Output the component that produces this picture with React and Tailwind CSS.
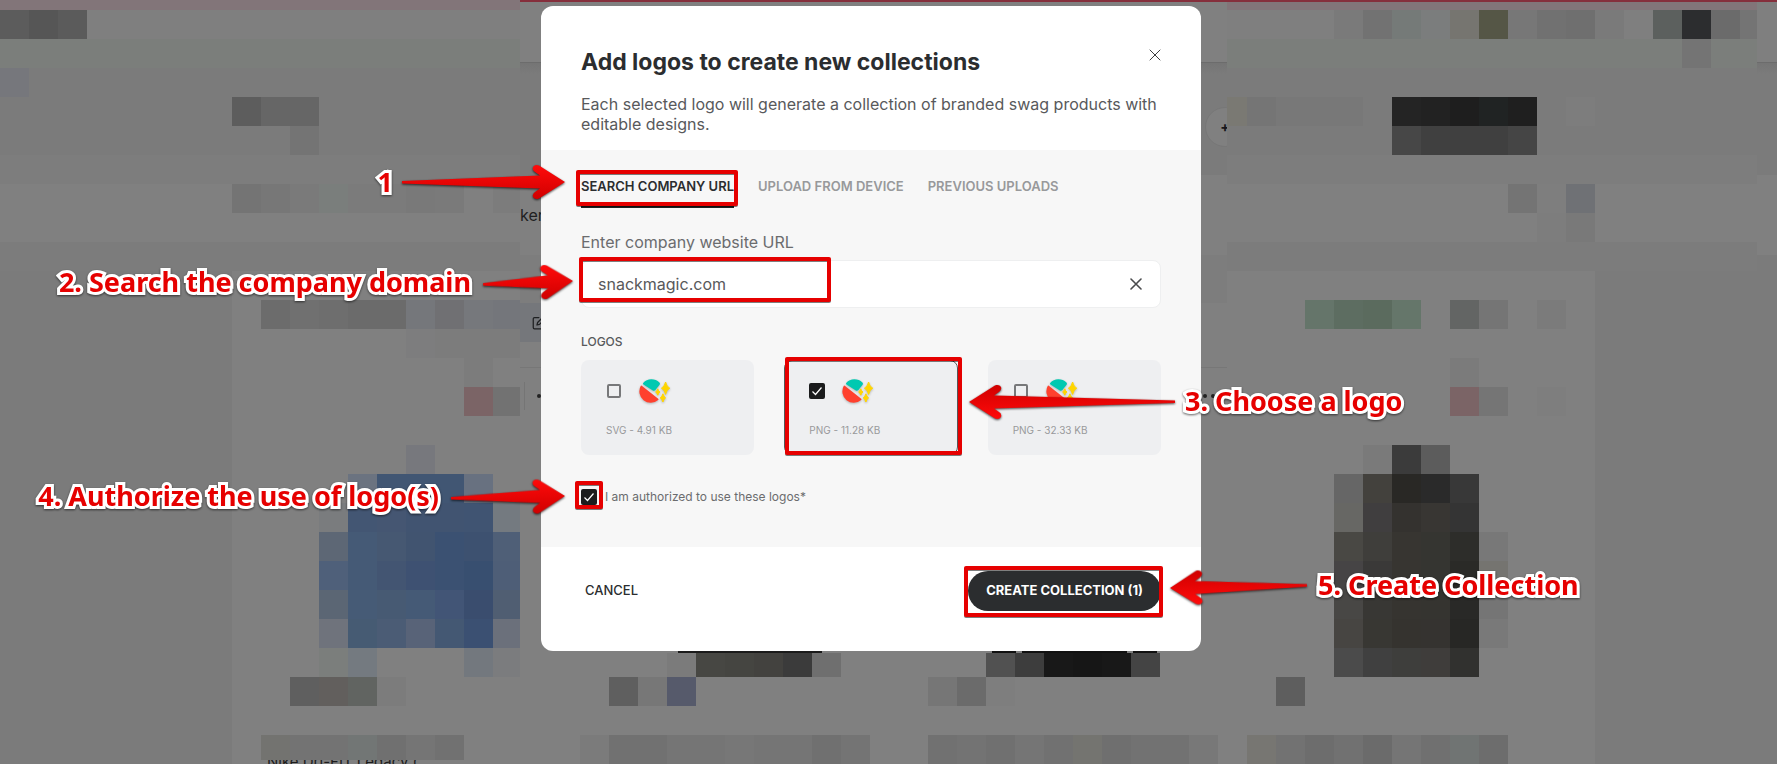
import { useState } from "react";
import { FiEdit } from "react-icons/fi";
import { clsx } from "clsx";

// Pixelated areas: [row, first column, colors of the following cells]
const LEFT_CELLS = [
  [0, 0, "#5c5c5c #565656 #5b5b5b"],
  [2, 0, "#76777c"],
  [3, 8, "#5d5d5d #666666 #666666"],
  [4, 10, "#747474"],
  [6, 8, "#747474 #777777 #7a7a7a #7a7e7c #7b7b7b #7b7b7b #797979 #7a7a7a #808080 #7c7c7c"],
  [10, 9, "#6c6c6c #707070 #6e6e6e #6b6b6b #6b6b6b #75777b #707073 #76787c #74767b"],
  [11, 14, "#7d7d7e #7c7c7c #7c7c7c #7c7c7c"],
  [12, 16, "#7c7c7c"],
  [13, 16, "#7b6466 #727272"],
  [15, 14, "#77787d"],
  [16, 12, "#6b7380 #415673 #415673 #415673 #687180"],
  [17, 11, "#7a7c7e #435673 #455672 #415471 #415471 #405472 #747a80"],
  [18, 11, "#5d6775 #455a76 #465872 #415470 #3b5172 #3d5170 #4f5f77"],
  [19, 11, "#4f607a #455a76 #435572 #3e5172 #3b5172 #384f70 #4e5e77"],
  [20, 11, "#5b6674 #465b76 #475a73 #455a76 #425576 #3a4d6e #505e72"],
  [21, 11, "#6f737c #465b73 #4b5c75 #586378 #445873 #3b5072 #6b707b"],
  [22, 11, "#7b7e7c #747a80 #808080 #808080 #808080 #73787e #7b7c7e"],
  [23, 10, "#5f5f5f #625f5d #616461 #7c7c7c"],
  [25, 9, "#737370 #737373 #737373 #727675 #707070 #757575 #717171"],
];

const RIGHT_CELLS = [
  [0, 4, "#7a7a7a #727272 #757a78 #7b7d7d #767570 #555646 #777777 #717171 #6f6f6f #7a7a7a #7f7f7f #5c605e #2c2d2f #6b6b6b #747474"],
  [1, 16, "#747474"],
  [3, 0, "#7a7973 #757575 #787878 #787878 #787878 #7b7b7b #242424 #222222 #1e1e1e #202323 #1f1f1f #7b7b7b #7d7d7d"],
  [4, 6, "#474747 #404040 #404040 #404040 #454545"],
  [6, 10, "#747474 #7e7e7e #6f7175"],
  [7, 11, "#7d7d7d #797979"],
  [10, 3, "#65756a #5d6d61 #5b6b5e #65766a #808080 #636564 #757575 #808080 #7b7b7b"],
  [12, 8, "#7b7b7b"],
  [13, 8, "#7b6466 #757575 #808080 #7e7e7e"],
  [15, 5, "#7a7a7a #3b3b3b #5c5c5c"],
  [16, 4, "#666666 #43413d #292825 #2a2a2a #383838"],
  [17, 4, "#676764 #403e3f #34322f #383633 #343434"],
  [18, 4, "#494844 #3f3e3b #373531 #353531 #2d2d2a #787878"],
  [19, 4, "#464445 #3a3938 #373531 #353531 #2a2a27 #757470"],
  [20, 4, "#484745 #383734 #363430 #353430 #292927 #757575"],
  [21, 4, "#474542 #383733 #35332f #353330 #272725 #797979"],
  [22, 4, "#4b4b4b #404040 #3e3e3c #3f3d3b #31312f"],
  [23, 2, "#5e5e5e"],
  [25, 1, "#777672 #727272 #6d6d6d #717171 #6b6b6b #757575 #707070 #707473 #6d6d6d"],
];

const CENTER_CELLS = [
  [0, 5, "#7b7b7b #474743 #454541 #43423f #3b3b3b #6f6f6f"],
  [0, 16, "#515151 #3d3d3d #181818 #161616 #181818 #444444"],
  [1, 3, "#5f5f5f #777777 #565a6b"],
  [1, 14, "#767676 #6b6b6b #7e7e7e"],
  [3, 2, "#7b7b7b #717171 #717171 #757575 #757575 #777777 #757575 #757575 #707070 #747474"],
  [3, 14, "#717171 #737373 #707070 #757575 #717171 #747470 #6f6f6f #727272 #727272 #787878"],
];

const LOGOS = [
  { id: "svg", label: "SVG - 4.91 KB" },
  { id: "png-small", label: "PNG - 11.28 KB" },
  { id: "png-large", label: "PNG - 32.33 KB" },
];

const TABS = ["Search company URL", "Upload from device", "Previous uploads"];

// rowStart and colStart are the grid lines of row 0 and column 0
function Cells({ data, rowStart = 2, colStart = 1 }) {
  return data.flatMap(([row, col, colors]) =>
    colors.split(" ").map((color, i) => (
      <div
        key={`${row}-${col + i}`}
        style={{
          gridRow: row + rowStart,
          gridColumn: col + i + colStart,
          backgroundColor: color,
        }}
      />
    ))
  );
}

function Bands() {
  return (
    <>
      <div className="col-span-full row-start-1 bg-[#827579]" />
      <div className="col-span-full row-start-2 bg-[#7f7f7f]" />
      <div className="col-span-full row-start-3 bg-[#7b7e7b]" />
      <div className="col-span-full row-start-4 row-end-7 bg-[#7b7b7b]" />
      <div className="col-span-full row-start-7 bg-[#7d7d7d]" />
      <div className="col-span-full row-start-8 row-end-10 bg-[#808080]" />
      <div className="col-span-full row-start-10 bg-[#7c7c7c]" />
    </>
  );
}

function Backdrop() {
  return (
    <div className="absolute inset-0 flex overflow-hidden bg-[#808080]" aria-hidden="true">
      {/* Left column */}
      <div className="grid w-[520px] shrink-0 grid-cols-[repeat(18,29px)] grid-rows-[10px_repeat(25,29px)_25px_4px] overflow-hidden">
        <Bands />
        <div className="col-start-1 col-end-9 row-start-11 row-end-29 bg-[#7b7b7b]" />
        <Cells data={LEFT_CELLS} />
        <div className="col-start-10 col-end-19 row-start-28 flex h-1 items-center overflow-hidden pl-1.5 font-['Inter'] text-[15px] whitespace-nowrap text-[#1c1c1c]">
          Nike Dri-FIT Legacy (
        </div>
      </div>

      {/* Middle column, mostly covered by the dialog */}
      <div className="flex min-w-0 flex-1 flex-col overflow-hidden">
        <div className="h-0.5 bg-[#852f3c]" />
        <div className="h-15 bg-[#808080]" />
        <div className="flex h-[113px] justify-end border-t border-[#6c6c6c] bg-linear-to-b from-[#757575] to-[#7b7b7b] to-10% pt-11">
          <div className="-mr-4.5 flex size-10 items-center justify-center rounded-full border border-[#777777] bg-[#808080] text-sm font-bold text-[#16161c]">
            +
          </div>
        </div>
        <div className="flex h-20 items-center bg-[#808080] font-['Inter'] text-base text-[#1f2022]">
          kers
        </div>
        <div className="h-12 bg-[#7d7d7d]" />
        <div className="flex h-[39px]">
          <div className="flex w-20 items-center bg-[#75777b] pl-3 text-[#1f2022]">
            <FiEdit size={15} />
          </div>
        </div>
        <div className="h-[26px] border-b border-[#777777]" />
        <div className="flex h-14 items-center justify-between pr-3 pl-1">
          <div className="flex items-center border-l border-[#757575] py-3 pl-3">
            <span className="size-1 rounded-full bg-[#222222]" />
          </div>
          <div className="flex gap-1">
            <span className="size-1 rounded-full bg-[#222222]" />
            <span className="size-1 rounded-full bg-[#222222]" />
          </div>
        </div>
        <div className="flex-1" />
        <div className="flex h-1 pl-[158px]">
          <div className="w-36 bg-[#1b1b1b]" />
          <div className="ml-[170px] w-6 bg-[#111111]" />
          <div className="ml-1.5 w-[105px] bg-[#111111]" />
          <div className="ml-1.5 w-6 bg-[#111111]" />
        </div>
        <div className="grid grid-cols-[2px_repeat(24,29px)] grid-rows-[24px_repeat(3,29px)]">
          <Cells data={CENTER_CELLS} rowStart={1} colStart={2} />
        </div>
      </div>

      {/* Right column */}
      <div className="grid w-[530px] shrink-0 grid-cols-[20px_repeat(18,29px)] grid-rows-[8px_repeat(26,29px)] overflow-hidden border-t-2 border-[#852f3c]">
        <Bands />
        <div className="col-start-14 col-end-20 row-start-11 row-end-28 bg-[#7b7b7b]" />
        <Cells data={RIGHT_CELLS} />
      </div>

      {/* Page gutter */}
      <div className="flex w-5 shrink-0 flex-col">
        <div className="h-0.5 bg-[#852f3c]" />
        <div className="h-15 bg-[#7f7f7f]" />
        <div className="h-[113px] border-t border-[#6c6c6c] bg-linear-to-b from-[#757575] to-[#7b7b7b] to-10%" />
        <div className="h-20 bg-[#808080]" />
        <div className="flex-1 bg-[#7b7b7b]" />
      </div>
    </div>
  );
}

function BrandLogo() {
  return (
    <svg viewBox="0 0 33 26" className="h-[26px] w-[33px] drop-shadow-[0_1px_1px_rgba(0,0,0,0.25)]" aria-hidden="true">
      <path d="M4.2 5A11.2 11.2 0 0 1 20.4 4.6Q21.4 5.6 20.6 6.8L16.4 12Q15.2 13.4 13.8 12.4L4.8 6.8Q3.6 6 4.2 5Z" fill="#00c9b1" />
      <path d="M1.8 7.8Q2.2 7.4 2.8 7.8L19.2 20.8Q19.8 21.4 19.2 22A11.4 11.4 0 0 1 1.8 7.8Z" fill="#ff402e" />
      <path d="M26.6 4Q27.6 8.8 30.8 10.2Q27.6 11.6 26.6 16.4Q25.6 11.6 22.4 10.2Q25.6 8.8 26.6 4Z" fill="#ffd500" stroke="#ffd500" />
      <path d="M18.8 10.8Q19.4 13.2 21 14Q19.4 14.8 18.8 17.2Q18.2 14.8 16.6 14Q18.2 13.2 18.8 10.8Z" fill="#ffd500" stroke="#ffd500" />
      <path d="M23.9 15.8Q24.7 18.8 26.6 19.9Q24.7 21 23.9 24Q23.1 21 21.2 19.9Q23.1 18.8 23.9 15.8Z" fill="#ffd500" stroke="#ffd500" />
    </svg>
  );
}

function CrossIcon({ className, strokeWidth }) {
  return (
    <svg viewBox="0 0 12 12" className={className} aria-hidden="true">
      <path d="M1 1L11 11M11 1L1 11" fill="none" stroke="currentColor" strokeWidth={strokeWidth} strokeLinecap="round" />
    </svg>
  );
}

function CheckBox({ id, checked, onChange }) {
  return (
    <span className="grid size-4 shrink-0 place-items-center">
      <input
        id={id}
        type="checkbox"
        checked={checked}
        onChange={onChange}
        className="peer col-start-1 row-start-1 size-3.5 appearance-none rounded-xs border-2 border-[#77787a] checked:size-4 checked:border-[#1b1c1d] checked:bg-[#1b1c1d]"
      />
      <svg viewBox="0 0 16 16" className="pointer-events-none col-start-1 row-start-1 hidden size-4 peer-checked:block" aria-hidden="true">
        <path d="M3.5 8.5L6.5 11.5L12.5 4.5" fill="none" stroke="#ffffff" strokeWidth="1.2" />
      </svg>
    </span>
  );
}

// Right-pointing arrow with its tip at x, y
function Arrow({ x, y, length, angle = 0 }) {
  return (
    <g transform={`translate(${x} ${y}) rotate(${angle})`}>
      <path
        d={`M0 0L-26 -16.5Q-30 -18 -32 -15Q-33 -12 -30 -10L-25 -6.5L${-length} -1V1.5L-25 6.5L-30 10Q-33 12 -32 15Q-30 18 -26 16.5Z`}
        fill="url(#arrowRed)"
      />
    </g>
  );
}

function Note({ className, children }) {
  return (
    <p
      className={clsx(
        "absolute font-['Noto_Sans'] text-[27px] leading-8 font-bold whitespace-nowrap text-[#e60000] [-webkit-text-stroke:6px_white] [paint-order:stroke_fill] [stroke-linejoin:round] drop-shadow-[0_1px_1px_rgba(0,0,0,0.6)]",
        className
      )}
    >
      {children}
    </p>
  );
}

function Annotations() {
  return (
    <div className="pointer-events-none absolute inset-0">
      <svg className="size-full overflow-visible" aria-hidden="true">
        <defs>
          <linearGradient id="arrowRed" x1="0" y1="0" x2="0" y2="1">
            <stop offset="0" stopColor="#ff0a0a" />
            <stop offset="1" stopColor="#d00000" />
          </linearGradient>
        </defs>
        <g fill="none" stroke="#e60000" strokeWidth="4" strokeLinejoin="round" className="drop-shadow-[0_1px_0px_rgba(0,0,0,0.5)]">
          <rect x="37" y="166" width="158" height="32" />
          <rect x="40" y="253" width="248" height="41" />
          <rect x="246" y="353" width="173" height="94" />
          <rect x="36" y="477" width="24" height="24" />
          <rect x="425" y="562" width="195" height="47" />
        </g>
        <g className="drop-shadow-[0_1px_1px_rgba(0,0,0,0.7)]">
          <Arrow x={24} y={176} length={163} />
          <Arrow x={32} y={275} length={90} angle={-2} />
          <Arrow x={24} y={490} length={114} angle={-1} />
          <Arrow x={428} y={396} length={206} angle={180} />
          <Arrow x={629} y={582} length={137} angle={179} />
        </g>
      </svg>
      <Note className="top-[160px] right-[808px]">1</Note>
      <Note className="top-[260px] right-[730px]">2. Search the company domain</Note>
      <Note className="top-[474px] right-[762px]">4. Authorize the use of logo(s)</Note>
      <Note className="top-[379px] left-[644px]">3. Choose a logo</Note>
      <Note className="top-[563px] left-[777px]">5. Create Collection</Note>
    </div>
  );
}

export default function App() {
  const [tab, setTab] = useState(TABS[0]);
  const [url, setUrl] = useState("snackmagic.com");
  const [selected, setSelected] = useState(["png-small"]);
  const [authorized, setAuthorized] = useState(true);

  const toggleLogo = (id) =>
    setSelected((ids) =>
      ids.includes(id) ? ids.filter((item) => item !== id) : [...ids, id]
    );

  return (
    <div className="relative flex min-h-screen items-start justify-center overflow-hidden pt-1.5 pr-[35px] font-['Inter',sans-serif]">
      <Backdrop />

      <div className="relative w-full max-w-[660px]">
        <main role="dialog" aria-labelledby="dialog-title" className="overflow-hidden rounded-xl bg-white">
          {/* Header */}
          <header className="px-10 pt-10 pb-4">
            <div className="flex items-start justify-between">
              <h1 id="dialog-title" className="text-[23px] leading-8 font-bold text-[#2b2d2f]">
                Add logos to create new collections
              </h1>
              <button type="button" aria-label="Close" className="mt-[3px] text-[#3c3d3f]">
                <CrossIcon className="size-3" strokeWidth="1" />
              </button>
            </div>
            <p className="mt-4 text-base leading-5 text-[#58595b]">
              Each selected logo will generate a collection of branded swag products with editable designs.
            </p>
          </header>

          {/* Body */}
          <section className="bg-[#f7f7f7] px-10 pt-6 pb-[42px]">
            <div role="tablist" className="flex gap-6">
              {TABS.map((name) => (
                <button
                  key={name}
                  type="button"
                  role="tab"
                  aria-selected={tab === name}
                  onClick={() => setTab(name)}
                  className={clsx(
                    "border-b-2 pb-2 text-[13px] leading-6 font-semibold uppercase",
                    tab === name ? "border-[#1f2021] text-[#2b2d2f]" : "border-transparent text-[#98999b]"
                  )}
                >
                  {name}
                </button>
              ))}
            </div>

            <label htmlFor="company-url" className="mt-6 block text-base leading-5 text-[#6b6c6e]">
              Enter company website URL
            </label>
            <div className="mt-2 flex h-12 items-center rounded-lg border border-[#eeeff0] bg-white pr-4.5 pl-4">
              <input
                id="company-url"
                value={url}
                onChange={(e) => setUrl(e.target.value)}
                className="min-w-0 flex-1 text-base text-[#58595b] outline-none"
              />
              <button type="button" aria-label="Clear" onClick={() => setUrl("")} className="text-[#4a4b4d]">
                <CrossIcon className="size-3" strokeWidth="1.6" />
              </button>
            </div>

            <h2 className="mt-[26px] text-xs leading-4 font-medium text-[#58595b]">LOGOS</h2>
            <div className="mt-2.5 grid grid-cols-3 gap-[30px]">
              {LOGOS.map((logo) => (
                <label
                  key={logo.id}
                  htmlFor={logo.id}
                  className={clsx(
                    "h-[95px] rounded-lg border bg-[#eeeff1] px-6 pt-[17px]",
                    selected.includes(logo.id) ? "border-[#55575a]" : "border-transparent"
                  )}
                >
                  <span className="flex items-center gap-[17px]">
                    <CheckBox id={logo.id} checked={selected.includes(logo.id)} onChange={() => toggleLogo(logo.id)} />
                    <BrandLogo />
                  </span>
                  <span className="mt-4 block text-[10px] leading-5 text-[#98999b]">{logo.label}</span>
                </label>
              ))}
            </div>

            <div className="mt-[34px] flex items-center gap-2">
              <CheckBox id="authorized" checked={authorized} onChange={() => setAuthorized(!authorized)} />
              <label htmlFor="authorized" className="text-xs leading-4 text-[#6b6c6e]">
                I am authorized to use these logos*
              </label>
            </div>
          </section>

          {/* Footer */}
          <footer className="flex items-center justify-between px-10 pt-6 pb-10">
            <button type="button" className="px-1 text-[13px] font-medium text-[#2b2d2f]">
              CANCEL
            </button>
            <button type="button" className="h-10 rounded-full bg-[#2b2d2f] px-[18px] text-[13px] font-bold text-white">
              CREATE COLLECTION ({selected.length})
            </button>
          </footer>
        </main>

        <Annotations />
      </div>
    </div>
  );
}
